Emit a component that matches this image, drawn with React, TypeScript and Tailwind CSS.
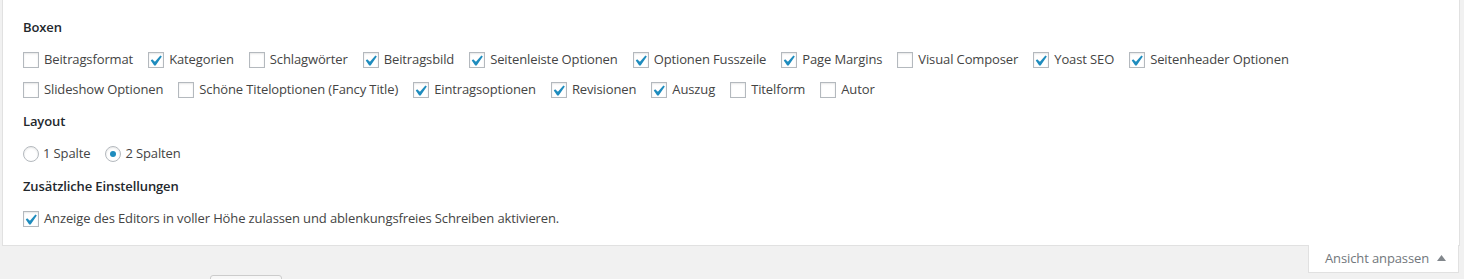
import React from "react"

interface BoxItem {
  label: string;
  checked: boolean;
}

const boxesRowOne: BoxItem[] = [
  { label: "Beitragsformat", checked: false },
  { label: "Kategorien", checked: true },
  { label: "Schlagwörter", checked: false },
  { label: "Beitragsbild", checked: true },
  { label: "Seitenleiste Optionen", checked: true },
  { label: "Optionen Fusszeile", checked: true },
  { label: "Page Margins", checked: true },
  { label: "Visual Composer", checked: false },
  { label: "Yoast SEO", checked: true },
  { label: "Seitenheader Optionen", checked: true },
]

const boxesRowTwo: BoxItem[] = [
  { label: "Slideshow Optionen", checked: false },
  { label: "Schöne Titeloptionen (Fancy Title)", checked: false },
  { label: "Eintragsoptionen", checked: true },
  { label: "Revisionen", checked: true },
  { label: "Auszug", checked: true },
  { label: "Titelform", checked: false },
  { label: "Autor", checked: false },
]

const Checkbox = ({ checked }: { checked: boolean }) => (
  <span className="relative inline-block w-4 h-4 shrink-0 border border-[#b4b9be] bg-white shadow-[inset_0_1px_2px_rgba(0,0,0,0.1)] mr-[5px]">
    {checked && (
      <svg className="absolute -left-px -top-px w-4 h-4" viewBox="3.2 1.6 15 15">
        <path fill="#1e8cbe" d="M14.83 4.89l1.34.94-5.81 8.38H9.02L5.78 9.67l1.34-1.25 2.57 2.4z" />
      </svg>
    )}
  </span>
)

const Radio = ({ checked }: { checked: boolean }) => (
  <span className="flex items-center justify-center w-4 h-4 shrink-0 rounded-full border border-[#b4b9be] bg-white shadow-[inset_0_1px_2px_rgba(0,0,0,0.1)] mr-[4px]">
    {checked && <span className="w-[6px] h-[6px] rounded-full bg-[#1e8cbe]" />}
  </span>
)

const Heading = ({ children }: { children: React.ReactNode }) => (
  <h5 className="text-[13px] leading-5 font-semibold text-[#23282d] mb-[8px]">{children}</h5>
)

const BoxRow = ({ items }: { items: BoxItem[] }) => (
  <div className="flex h-[30px] items-center">
    {items.map((item, i) => (
      <label key={i} className="flex items-center mr-[15px] text-[#444] whitespace-nowrap">
        <Checkbox checked={item.checked} />
        {item.label}
      </label>
    ))}
  </div>
)

const App = () => {
  return (
    <div className="w-[1464px] h-[279px] overflow-hidden bg-[#f1f1f1] font-['Open_Sans',sans-serif] text-[13px] tracking-[-0.12px]">
      <div className="ml-[2px] mr-[4px] bg-white border border-t-0 border-[#e1e1e1] pl-[20px] pt-[17px] pb-[11px]">
        <Heading>Boxen</Heading>
        <BoxRow items={boxesRowOne} />
        <BoxRow items={boxesRowTwo} />

        <div className="mt-[6px]">
          <Heading>Layout</Heading>
        </div>
        <div className="flex h-[30px] items-center text-[#444]">
          <label className="flex items-center mr-[15px]">
            <Radio checked={false} />
            1 Spalte
          </label>
          <label className="flex items-center">
            <Radio checked={true} />
            2 Spalten
          </label>
        </div>

        <div className="mt-[7px]">
          <Heading>Zusätzliche Einstellungen</Heading>
        </div>
        <div className="flex h-[30px] items-center text-[#444]">
          <label className="flex items-center">
            <Checkbox checked={true} />
            Anzeige des Editors in voller Höhe zulassen und ablenkungsfreies Schreiben aktivieren.
          </label>
        </div>
      </div>

      <div className="flex justify-end mr-[5px]">
        <button className="relative -mt-px flex items-center h-[28px] w-[151px] pl-[16px] pr-[6px] bg-white border border-t-0 border-[#e1e1e1] text-[#72777c] text-[13px]">
          Ansicht anpassen
          <svg className="ml-[8px] mb-[2px]" width="9" height="6" viewBox="0 0 9 6">
            <path d="M4.5 0L9 6H0z" fill="#82878c" />
          </svg>
        </button>
      </div>

      <div className="pl-[210px] pt-[2px]">
        <div className="w-[72px] h-[30px] border border-[#cccccc] rounded-[3px] bg-[#f7f7f7]" />
      </div>
    </div>
  )
}

export default App
